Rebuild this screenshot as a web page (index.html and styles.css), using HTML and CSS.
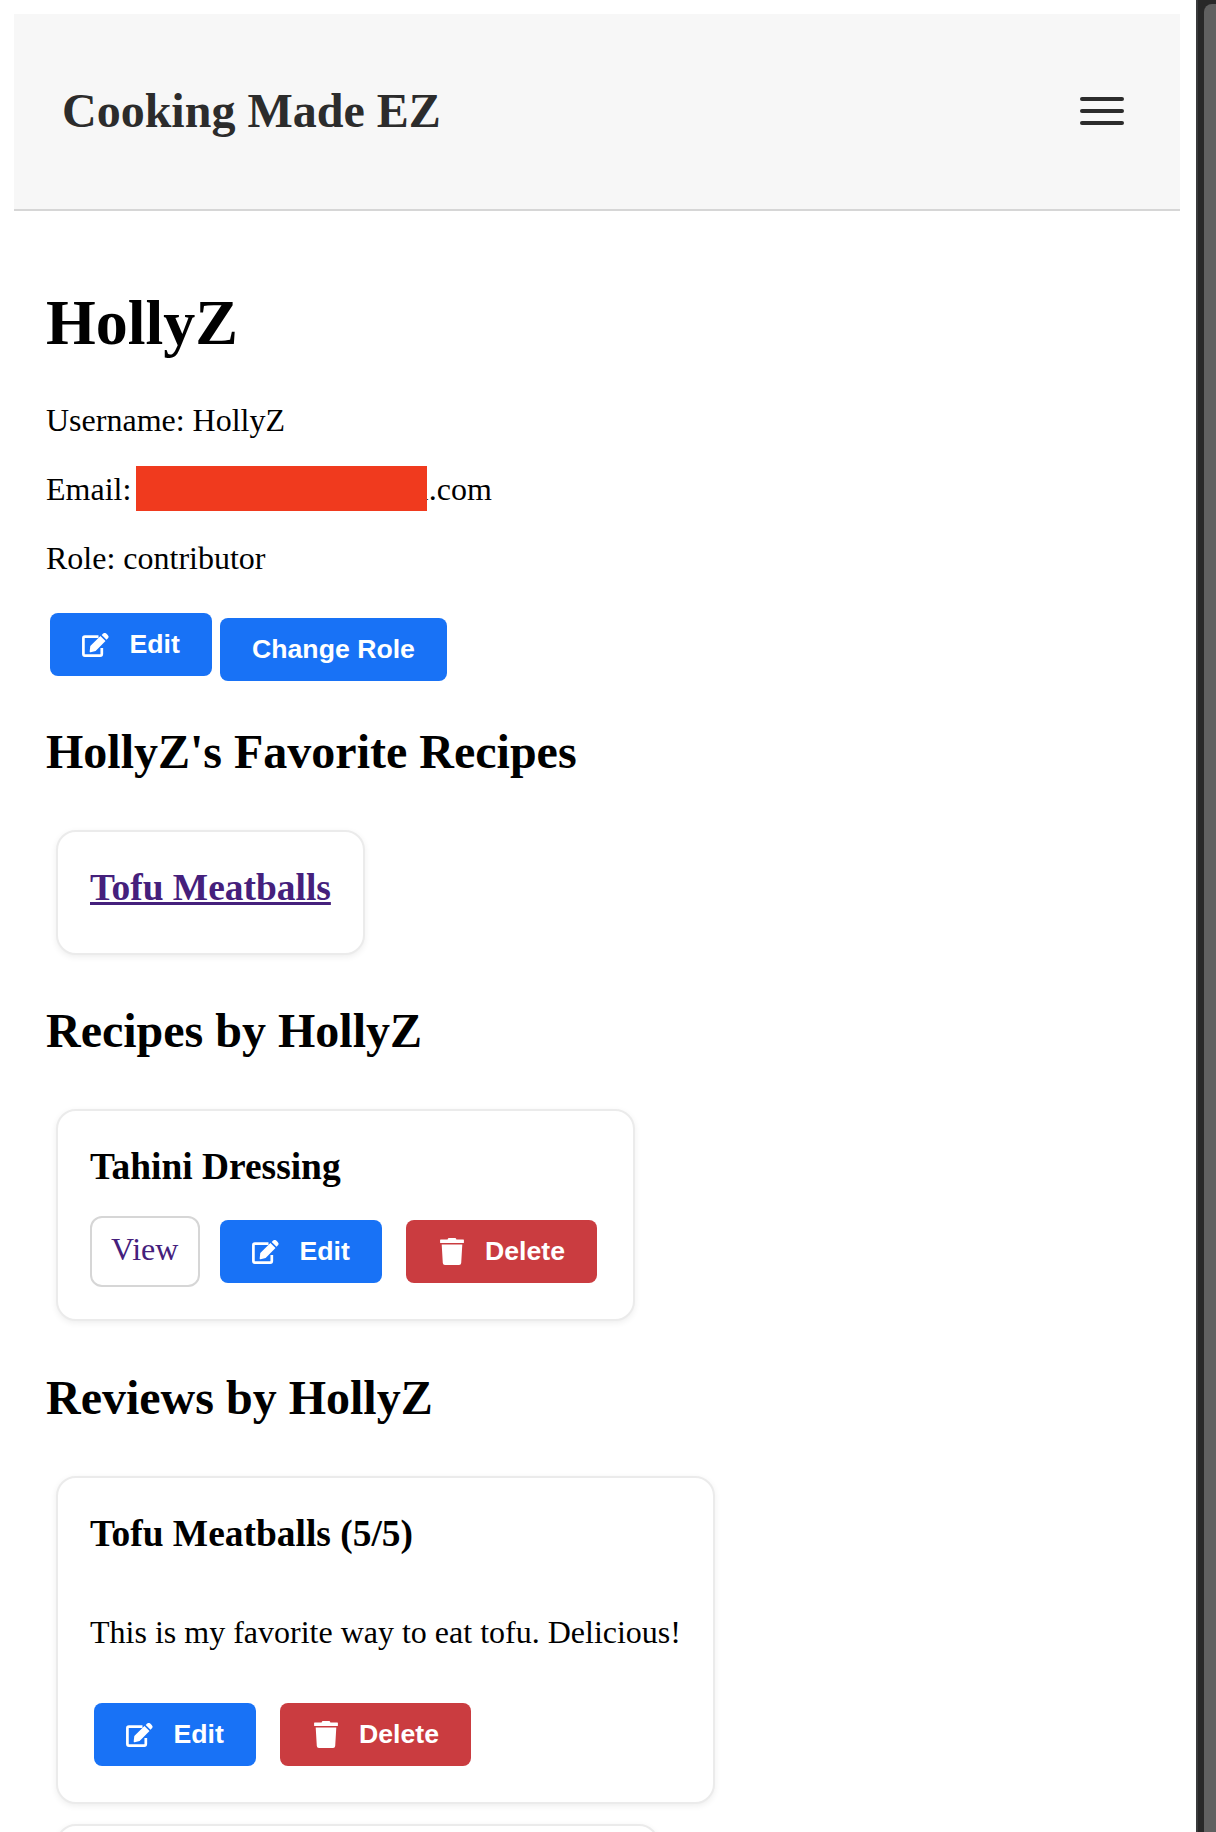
FILE: index.html
```html
<!DOCTYPE html>
<html lang="en">
<head>
<meta charset="utf-8">
<title>Cooking Made EZ</title>
<link rel="stylesheet" href="styles.css">
</head>
<body>
<svg class="sprite" aria-hidden="true">
  <symbol id="pen" viewBox="0 0 27 24">
    <path d="M16.500 3.700H2.900a1.500 1.500 0 0 0-1.500 1.500v15.900a1.500 1.500 0 0 0 1.500 1.500h15.400a1.500 1.500 0 0 0 1.500-1.500v-6" fill="none" stroke="currentColor" stroke-width="2.700"/>
    <path d="M18.400 3l5.100 5.100L13.600 18l-4.900 1.200a.8.8 0 0 1-1-.9l.6-5.200z"/>
    <path d="M19.700 2l1.200-1.200a2.600 2.600 0 0 1 3.600 0l1.200 1.200a2.600 2.600 0 0 1 0 3.600l-1.200 1.200z"/>
  </symbol>
  <symbol id="trash" viewBox="0 0 24 27">
    <path d="M.6 1.400h7L8 .5a.8.8 0 0 1 .7-.5h6.600a.8.8 0 0 1 .7.5l.4.900h7a.5.500 0 0 1 .5.5v2.700a.5.500 0 0 1-.5.5H.6a.5.500 0 0 1-.5-.5V1.900a.5.500 0 0 1 .5-.5z"/>
    <path d="M1.700 6.500h20.600l-1.100 18.400a2.200 2.200 0 0 1-2.200 2H5a2.200 2.200 0 0 1-2.200-2z"/>
  </symbol>
</svg>
<div class="page">
  <header class="header">
    <div class="brand">Cooking Made EZ</div>
    <div class="menu"><span class="bar"></span><span class="bar"></span><span class="bar"></span></div>
  </header>
  <main class="main">
    <h1 class="name">HollyZ</h1>
    <p class="line">Username: HollyZ</p>
    <p class="line email"><span>Email:</span><span class="redacted"></span><span class="domain">l.com</span></p>
    <p class="line">Role: contributor</p>
    <div class="actions">
      <button class="btn edit"><svg class="pen"><use href="#pen"/></svg>Edit</button>
      <button class="btn role">Change Role</button>
    </div>

    <h2 class="section">HollyZ's Favorite Recipes</h2>
    <div class="card favorite">
      <h3 class="title"><a class="link" href="#">Tofu Meatballs</a></h3>
    </div>

    <h2 class="section">Recipes by HollyZ</h2>
    <div class="card recipe">
      <h3 class="title">Tahini Dressing</h3>
      <div class="controls">
        <a class="view" href="#">View</a>
        <button class="btn edit"><svg class="pen"><use href="#pen"/></svg>Edit</button>
        <button class="btn delete"><svg class="trash"><use href="#trash"/></svg>Delete</button>
      </div>
    </div>

    <h2 class="section">Reviews by HollyZ</h2>
    <div class="card review">
      <h3 class="title">Tofu Meatballs (5/5)</h3>
      <p class="comment">This is my favorite way to eat tofu. Delicious!</p>
      <div class="controls">
        <button class="btn edit"><svg class="pen"><use href="#pen"/></svg>Edit</button>
        <button class="btn delete"><svg class="trash"><use href="#trash"/></svg>Delete</button>
      </div>
    </div>
    <div class="card next"></div>
  </main>
</div>
<div class="rail"><div class="thumb"></div></div>
</body>
</html>
```
FILE: styles.css
```css
* { box-sizing: border-box; }

body {
  margin: 0;
  height: 1832px;
  display: flex;
  overflow: hidden;
  background: #fff;
  color: #000;
  font: 32px/37px "Liberation Serif", "Times New Roman", serif;
}

h1, h2, h3, p { margin: 0; }

.sprite { position: absolute; width: 0; height: 0; }

.page { width: 1196px; height: 1832px; overflow: hidden; padding: 14px 16px 0 14px; }

.header {
  display: flex;
  align-items: center;
  justify-content: space-between;
  height: 197px;
  padding: 0 56px 1px 48px;
  background: #f7f7f7;
  border-bottom: 2px solid #d6d6d6;
}

.brand { font-size: 48px; line-height: 55px; padding-bottom: 2px; font-weight: bold; color: #2c2c2c; }

.menu { display: flex; flex-direction: column; gap: 8px; width: 44px; }
.bar { height: 4px; border-radius: 2px; background: #2c2c2c; }

.main { padding: 75px 0 0 32px; }

.name { font-size: 64px; line-height: 74px; margin-bottom: 42px; }

.line { margin-bottom: 32px; }

.email { display: flex; align-items: flex-start; height: 37px; }
.redacted {
  z-index: 1;
  width: 291px;
  height: 45px;
  margin: -5px 0 0 4.5px;
  background: #f03a1e;
}
.domain { margin-left: -7px; }

.actions { display: flex; gap: 8px; margin: 36px 0 0 4px; }

.btn {
  display: flex;
  align-items: center;
  height: 63px;
  padding: 0 0 0 32px;
  border: 0;
  border-radius: 8px;
  background: #1872f6;
  color: #fff;
  font: bold 26.67px/31px "Liberation Sans", Arial, sans-serif;
}
.edit { width: 162px; }
.role { width: 227px; margin-top: 5px; }
.delete { width: 191px; background: #ca3c40; }

.pen, .trash { fill: currentColor; flex: none; }
.pen { width: 27px; height: 24px; margin: 1px 20.500px 0 0; }
.trash { width: 24px; height: 27px; margin: 0 21px 0 2px; }

.section { font-size: 48px; line-height: 55px; margin: 43px 0 51px; }

.card {
  width: 309px;
  margin-left: 10px;
  padding: 34px 32px 0;
  border: 2px solid #ebebeb;
  border-radius: 20px;
  background: #fff;
  box-shadow: 0 2px 6px rgba(0, 0, 0, 0.07);
}
.card + .section { margin-top: 48px; }
.title { font-size: 37.44px; line-height: 43px; white-space: nowrap; }

.favorite { height: 125px; }
.link { color: #45207c; text-decoration-thickness: 3px; }

.recipe { width: 579px; height: 212px; }
.recipe + .section { margin-top: 49px; }
.controls { display: flex; align-items: center; gap: 24px; }
.recipe .controls { margin-top: 28px; }

.view {
  width: 110px;
  height: 71px;
  margin-right: -4px;
  padding: 13px 0 0 19px;
  border: 2px solid #d6d6d6;
  border-radius: 12px;
  color: #45207c;
  text-decoration: none;
}

.review { width: 659px; height: 328px; }
.comment { margin-top: 59px; }
.review .controls { margin: 52px 0 0 4px; }

.next { width: 603px; height: 200px; margin-top: 20px; }

.rail {
  flex: 1;
  padding: 4px 0 0 6px;
  border-left: 2px solid #3a3b3c;
  background: #282828;
}
.thumb { height: 1828px; border-radius: 8px 0 0 0; background: #606060; }
```
